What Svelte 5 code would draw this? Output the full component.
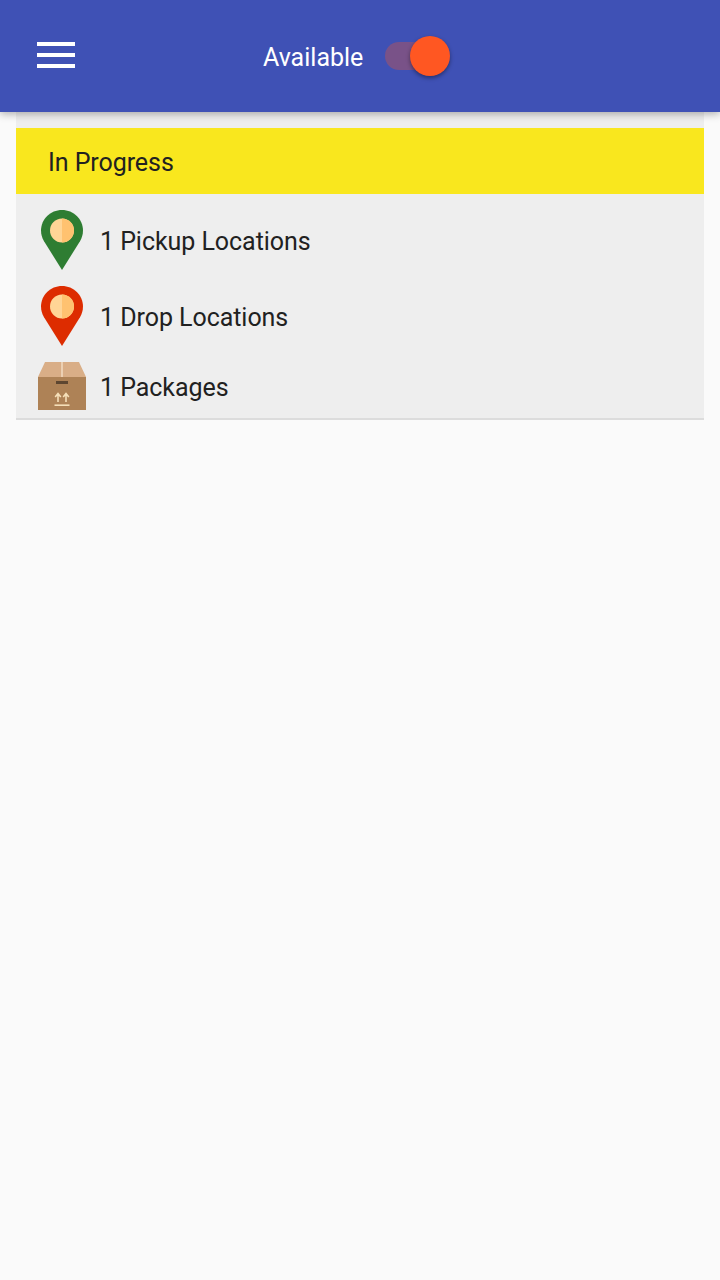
<script>
  const pin = "M21 0C9.4 0 0 9.2 0 20.6 0 24.6 1.1 28 3 31.2L21 60 39 31.2C40.9 28 42 24.6 42 20.6 42 9.2 32.6 0 21 0Z";
</script>

<div class="page">
  <header class="bar">
    <button class="menu" aria-label="Menu">
      <span></span><span></span><span></span>
    </button>
    <div class="status">
      <span class="label">Available</span>
      <div class="toggle"><div class="track"></div><div class="thumb"></div></div>
    </div>
  </header>

  <main class="content">
    <section class="card">
      <div class="title">In Progress</div>
      <div class="rows">
        <div class="row">
          <div class="icon">
            <svg width="42" height="60" viewBox="0 0 42 60">
              <path d={pin} fill="#2e7d32" />
              <circle cx="21" cy="20.5" r="12" fill="#ffd596" />
              <path d="M21 8.5a12 12 0 0 1 0 24Z" fill="#ffc270" />
            </svg>
          </div>
          <span>1 Pickup Locations</span>
        </div>
        <div class="row">
          <div class="icon">
            <svg width="42" height="60" viewBox="0 0 42 60">
              <path d={pin} fill="#dd2c00" />
              <circle cx="21" cy="20.5" r="12" fill="#ffd596" />
              <path d="M21 8.5a12 12 0 0 1 0 24Z" fill="#ffc270" />
            </svg>
          </div>
          <span>1 Drop Locations</span>
        </div>
        <div class="row">
          <div class="icon">
            <svg width="48" height="48" viewBox="0 0 48 48">
              <path d="M7 0H41L48 15H0Z" fill="#d9ae87" />
              <rect y="15" width="48" height="33" fill="#ae8256" />
              <rect x="23.2" y="0" width="1.6" height="15" fill="#f0d9bf" />
              <rect x="18" y="19" width="12" height="3" fill="#5d4630" />
              <path d="M20 40V32M17.2 35L20 31.5 22.8 35M28 40V32M25.2 35L28 31.5 30.8 35" stroke="#f5dfb8" stroke-width="1.6" fill="none" />
              <rect x="16.5" y="42.4" width="15" height="1.6" fill="#f5dfb8" />
            </svg>
          </div>
          <span>1 Packages</span>
        </div>
      </div>
    </section>
  </main>
</div>

<style>
  :global(body) {
    margin: 0;
    background: #fafafa;
  }
  .page {
    width: 720px;
    height: 1280px;
    display: flex;
    flex-direction: column;
    background: #fafafa;
    font-family: Roboto, "Liberation Sans", sans-serif;
    color: #212121;
    overflow: hidden;
  }
  .bar {
    height: 112px;
    flex: none;
    display: flex;
    align-items: flex-start;
    background: #3f51b5;
    position: relative;
    z-index: 1;
    box-shadow: 0 2px 8px rgba(0, 0, 0, 0.3);
  }
  .menu {
    display: flex;
    flex-direction: column;
    gap: 7px;
    margin: 42px 0 0 37px;
    padding: 0;
    border: 0;
    background: none;
    width: 38px;
  }
  .menu span {
    display: block;
    height: 4px;
    background: #fff;
  }
  .status {
    display: flex;
    align-items: flex-start;
    margin: 36px 0 0 188px;
  }
  .label {
    color: #fff;
    font-size: 25px;
    line-height: 44px;
  }
  .toggle {
    position: relative;
    width: 66px;
    height: 40px;
    margin-left: 22px;
  }
  .track {
    position: absolute;
    left: 0;
    top: 6px;
    width: 56px;
    height: 28px;
    border-radius: 14px;
    background: #ff5722;
    opacity: 0.3;
  }
  .thumb {
    position: absolute;
    left: 25px;
    top: 0;
    width: 40px;
    height: 40px;
    border-radius: 50%;
    background: #ff5722;
    box-shadow: 0 2px 4px rgba(0, 0, 0, 0.4);
  }
  .content {
    flex: 1;
    padding: 0 16px;
  }
  .card {
    background: #eeeeee;
    padding-top: 16px;
    border-bottom: 2px solid #dcdcdc;
  }
  .title {
    height: 66px;
    line-height: 70px;
    padding-left: 32px;
    background: #f9e71e;
    font-size: 25px;
    letter-spacing: -0.06px;
  }
  .rows {
    display: flex;
    flex-direction: column;
    gap: 16px;
    padding: 16px 0 8px 22px;
  }
  .row {
    display: flex;
    align-items: center;
    font-size: 25px;
    letter-spacing: -0.05px;
  }
  .row span {
    position: relative;
    top: 1px;
  }
  .icon {
    width: 48px;
    margin-right: 14px;
    display: flex;
    justify-content: center;
  }
  svg {
    display: block;
  }
</style>
